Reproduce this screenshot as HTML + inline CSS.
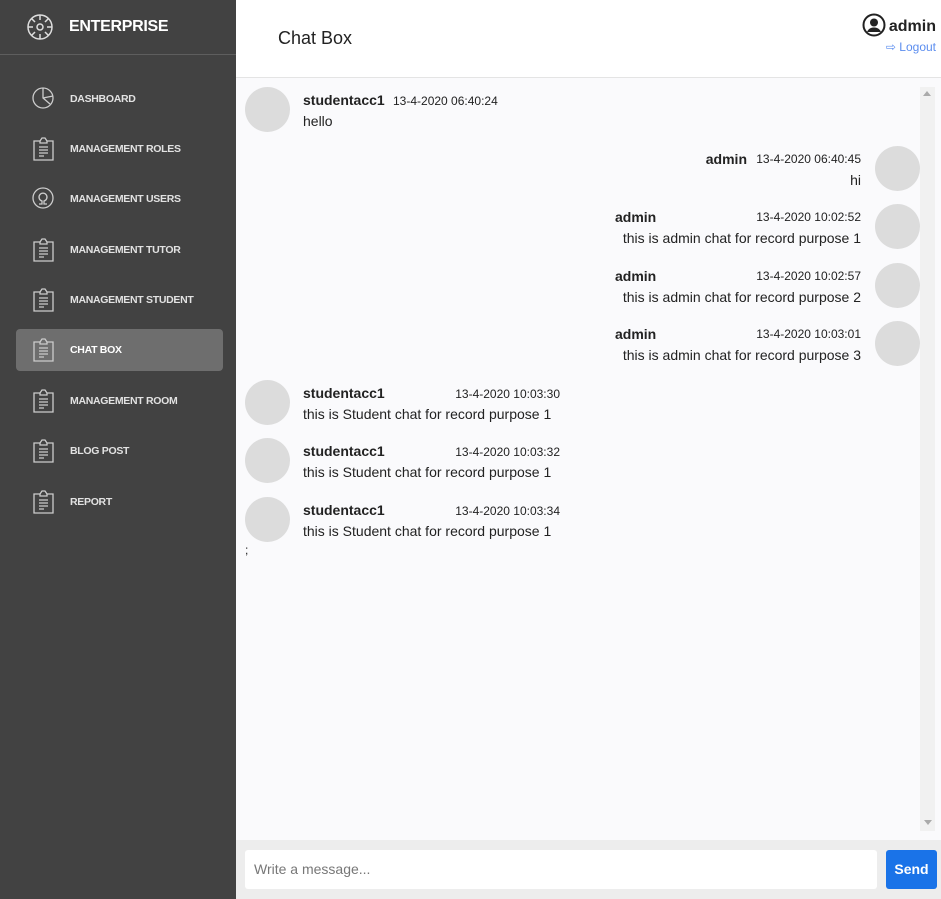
<!DOCTYPE html>
<html><head><meta charset="utf-8"><style>
*{margin:0;padding:0;box-sizing:border-box}
body{width:941px;height:899px;overflow:hidden;font-family:"Liberation Sans",Arial,sans-serif;background:#fff;position:relative;color:#222}
.sb{position:absolute;left:0;top:0;width:236px;height:899px;background:#424242}
.brand{position:absolute;left:69px;top:18px;color:#fff;font-weight:bold;font-size:16px;letter-spacing:-0.3px}
.hr{position:absolute;left:0;top:54px;width:236px;height:1px;background:#5e5e5e}
.it{position:absolute;left:70px;color:#e2e2e2;font-weight:bold;font-size:10.5px;letter-spacing:-0.3px}
.ic{position:absolute;left:32px}
.act{position:absolute;left:16px;top:329px;width:207px;height:42px;background:#6e6e6e;border-radius:4px}
.hd{position:absolute;left:236px;top:0;width:705px;height:78px;background:#fff;border-bottom:1px solid #e4e4e4}
.chat{position:absolute;left:236px;top:78px;width:705px;height:762px;background:#fafafc}
.scr{position:absolute;left:920px;top:87px;width:15px;height:744px;background:#f1f1f1}
.av{position:absolute;width:45px;height:45px;border-radius:50%;background:#dcdcdc}
.t{position:absolute;font-size:14px;white-space:nowrap}
.n{font-weight:bold}
.tm{position:absolute;font-size:12px;white-space:nowrap;color:#222}
.bot{position:absolute;left:236px;top:840px;width:705px;height:59px;background:#ededed}
</style></head><body>
<div class="sb">
<svg style="position:absolute;left:26px;top:13px" width="28" height="28" viewBox="0 0 28 28" fill="none" stroke="#ddd" stroke-width="1.5"><circle cx="14" cy="14" r="12"/><circle cx="14" cy="14" r="3"/><path d="M14 2v5M14 21v5M2 14h5M21 14h5M5.5 5.5l3.5 3.5M19 19l3.5 3.5M5.5 22.5L9 19M19 9l3.5-3.5"/></svg>
<div class="brand">ENTERPRISE</div>
<div class="hr"></div>
<div class="act"></div>
<svg class="ic" style="top:87px" width="22" height="22" viewBox="0 0 22 22" fill="none" stroke="#ccc" stroke-width="1.3"><circle cx="11" cy="11" r="10"/><path d="M11 1v10l7 6M11 11l10-2"/></svg>
<svg class="ic" style="top:187px" width="22" height="22" viewBox="0 0 22 22" fill="none" stroke="#ccc" stroke-width="1.3"><circle cx="11" cy="11" r="10"/><path d="M7 17h3v-3a4 4 0 1 1 2 0v3h3"/></svg>
<div class="it" style="top:93px">DASHBOARD</div>
<div class="it" style="top:143px">MANAGEMENT ROLES</div>
<div class="it" style="top:193px">MANAGEMENT USERS</div>
<div class="it" style="top:244px">MANAGEMENT TUTOR</div>
<div class="it" style="top:294px">MANAGEMENT STUDENT</div>
<div class="it" style="top:344px;color:#fff">CHAT BOX</div>
<div class="it" style="top:395px">MANAGEMENT ROOM</div>
<div class="it" style="top:445px">BLOG POST</div>
<div class="it" style="top:496px">REPORT</div>
</div>
<svg width="0" height="0" style="position:absolute"><defs><g id="clip" fill="none" stroke="#ccc" stroke-width="1.3"><path d="M1 4h6l2-3h3l2 3h6v19H1z"/><path d="M7 4v2h7V4M6 10h9M6 13h9M6 16h9M6 19h5"/></g></defs></svg>
<svg class="ic" style="position:absolute;left:33px;top:137px" width="22" height="25"><use href="#clip"/></svg>
<svg class="ic" style="position:absolute;left:33px;top:238px" width="22" height="25"><use href="#clip"/></svg>
<svg class="ic" style="position:absolute;left:33px;top:288px" width="22" height="25"><use href="#clip"/></svg>
<svg class="ic" style="position:absolute;left:33px;top:338px" width="22" height="25"><use href="#clip"/></svg>
<svg class="ic" style="position:absolute;left:33px;top:389px" width="22" height="25"><use href="#clip"/></svg>
<svg class="ic" style="position:absolute;left:33px;top:439px" width="22" height="25"><use href="#clip"/></svg>
<svg class="ic" style="position:absolute;left:33px;top:490px" width="22" height="25"><use href="#clip"/></svg>
<div class="hd">
<div style="position:absolute;left:42px;top:28px;font-size:18px;color:#222">Chat Box</div>
<svg style="position:absolute;left:626px;top:13px" width="24" height="24" viewBox="0 0 24 24"><circle cx="12" cy="12" r="10.5" fill="none" stroke="#222" stroke-width="2"/><circle cx="12" cy="9.5" r="4" fill="#222"/><path d="M5 19c1.5-3.5 4-4.5 7-4.5s5.5 1 7 4.5" fill="#222"/></svg>
<div style="position:absolute;right:5px;top:18px;font-size:16px;font-weight:bold">admin</div>
<div style="position:absolute;right:5px;top:40px;font-size:12px;color:#5b8def">&#x21E8; Logout</div>
</div>
<div class="chat"></div>
<div class="scr"></div>
<div style="position:absolute;left:923px;top:91px;border:4px solid transparent;border-bottom:5px solid #aaa;border-top:0"></div>
<div style="position:absolute;left:924px;top:820px;border:4px solid transparent;border-top:5px solid #aaa;border-bottom:0"></div>

<div class="av" style="left:245px;top:87px"></div>
<div class="t n" style="left:303px;top:92px">studentacc1</div><div class="tm" style="left:393px;top:94px">13-4-2020 06:40:24</div>
<div class="t" style="left:303px;top:113px">hello</div>

<div class="av" style="left:875px;top:146px"></div>
<div class="t n" style="right:194px;top:151px">admin</div><div class="tm" style="right:80px;top:152px">13-4-2020 06:40:45</div>
<div class="t" style="right:80px;top:172px">hi</div>

<div class="av" style="left:875px;top:204px"></div>
<div class="t n" style="left:615px;top:209px">admin</div><div class="tm" style="right:80px;top:210px">13-4-2020 10:02:52</div>
<div class="t" style="right:80px;top:230px">this is admin chat for record purpose 1</div>

<div class="av" style="left:875px;top:263px"></div>
<div class="t n" style="left:615px;top:268px">admin</div><div class="tm" style="right:80px;top:269px">13-4-2020 10:02:57</div>
<div class="t" style="right:80px;top:289px">this is admin chat for record purpose 2</div>

<div class="av" style="left:875px;top:321px"></div>
<div class="t n" style="left:615px;top:326px">admin</div><div class="tm" style="right:80px;top:327px">13-4-2020 10:03:01</div>
<div class="t" style="right:80px;top:347px">this is admin chat for record purpose 3</div>

<div class="av" style="left:245px;top:380px"></div>
<div class="t n" style="left:303px;top:385px">studentacc1</div><div class="tm" style="right:381px;top:387px">13-4-2020 10:03:30</div>
<div class="t" style="left:303px;top:406px">this is Student chat for record purpose 1</div>

<div class="av" style="left:245px;top:438px"></div>
<div class="t n" style="left:303px;top:443px">studentacc1</div><div class="tm" style="right:381px;top:445px">13-4-2020 10:03:32</div>
<div class="t" style="left:303px;top:464px">this is Student chat for record purpose 1</div>

<div class="av" style="left:245px;top:497px"></div>
<div class="t n" style="left:303px;top:502px">studentacc1</div><div class="tm" style="right:381px;top:504px">13-4-2020 10:03:34</div>
<div class="t" style="left:303px;top:523px">this is Student chat for record purpose 1</div>
<div class="t" style="left:245px;top:543px;font-size:12px">;</div>

<div class="bot">
<div style="position:absolute;left:9px;top:10px;width:632px;height:39px;background:#fff;border-radius:3px"></div>
<div style="position:absolute;left:18px;top:21px;font-size:14px;color:#777">Write a message...</div>
<div style="position:absolute;left:650px;top:10px;width:51px;height:39px;background:#1a73e8;border-radius:3px;color:#fff;font-weight:bold;font-size:14px;text-align:center;line-height:39px">Send</div>
</div>
</body></html>
